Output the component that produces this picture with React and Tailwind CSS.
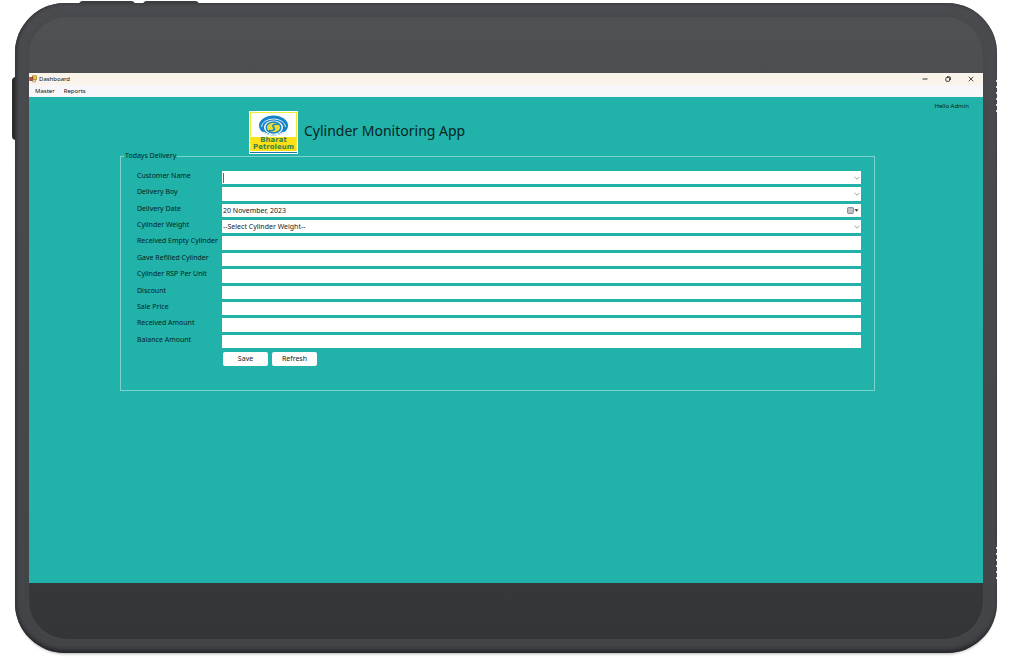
import React from "react";

const FIELDS = [
  { id: "customer", label: "Customer Name", kind: "select" },
  { id: "boy", label: "Delivery Boy", kind: "select" },
  { id: "date", label: "Delivery Date", kind: "date" },
  { id: "weight", label: "Cylinder Weight", kind: "select", value: "--Select Cylinder Weight--" },
  { id: "empty", label: "Received Empty Cylinder" },
  { id: "refilled", label: "Gave Refilled Cylinder" },
  { id: "rsp", label: "Cylinder RSP Per Unit" },
  { id: "discount", label: "Discount" },
  { id: "price", label: "Sale Price" },
  { id: "received", label: "Received Amount" },
  { id: "balance", label: "Balance Amount" },
];

function Logo() {
  return (
    <div className="flex h-[43px] w-[49px] shrink-0 flex-col border border-white bg-white">
      <div className="flex flex-1 flex-col border border-b-0 border-[#f4ea3a]">
        <svg viewBox="0 0 45 24" className="h-6 w-full" aria-hidden="true">
          <ellipse cx="22.5" cy="12.500" rx="14.5" ry="10" fill="#1683c4" />
          <path d="M10.500 14a12 8 0 0 1 24 0" fill="none" stroke="#d9eef8" strokeWidth="1" />
          <path d="M12 19q10.500 6 21 0" fill="none" stroke="#fff" strokeWidth="1" />
          <ellipse cx="22.5" cy="14.500" rx="9.5" ry="7" fill="#fff" />
          <ellipse cx="22.5" cy="14.500" rx="7.3" ry="5.4" fill="#e9dc35" stroke="#1683c4" strokeWidth="1.5" />
          <path d="M27 11.300c-5.500-.8-6 2-4.300 3.300s.5 3.700-4.700 3" fill="none" stroke="#1683c4" strokeWidth="1.5" />
        </svg>
        <div className="flex flex-1 flex-col items-center bg-[#fbe116] font-['DejaVu_Sans',sans-serif] text-[7px] leading-[7px] font-bold text-[#3d7f4b]">
          <span>Bharat</span>
          <span>Petroleum</span>
        </div>
      </div>
      <div className="h-[3px] border-t border-white bg-[#1878a8]" />
    </div>
  );
}

function Chevron() {
  return (
    <svg viewBox="0 0 6 4" className="pointer-events-none h-1 w-1.5 shrink-0" aria-hidden="true">
      <path d="M.5.700 3 3.200 5.500.700" fill="none" stroke="#888" strokeWidth=".8" />
    </svg>
  );
}

function Control({ field }) {
  if (field.kind === "select") {
    return (
      <div className="flex min-w-0 flex-1 items-center bg-white pr-px">
        {field.id === "customer" && <span className="ml-px h-2.5 w-px bg-[#666]" />}
        <select
          id={field.id}
          className="h-full min-w-0 flex-1 appearance-none bg-transparent pl-px text-[#222] outline-none"
        >
          <option>{field.value || ""}</option>
        </select>
        <Chevron />
      </div>
    );
  }
  if (field.kind === "date") {
    return (
      <div className="flex min-w-0 flex-1 items-center bg-[#fcfdfd] pr-0.5">
        <input
          id={field.id}
          defaultValue="20 November, 2023"
          className="h-full min-w-0 flex-1 bg-transparent pl-px text-[#222] outline-none"
        />
        <button type="button" aria-label="Open calendar" className="flex items-center">
          <svg viewBox="0 0 12 7" className="h-[7px] w-3" aria-hidden="true">
            <rect x=".5" y=".5" width="6" height="6" rx="1" fill="#b9bcc0" stroke="#777b80" strokeWidth=".8" />
            <path d="M1.500 2.500h4M1.500 4.500h4" stroke="#d4d5d8" strokeWidth=".5" />
            <path d="M7.500 2.300h4L9.500 4.800z" fill="#333" />
          </svg>
        </button>
      </div>
    );
  }
  return <input id={field.id} className="min-w-0 flex-1 bg-white pl-px text-[#222] outline-none" />;
}

function TitleBar() {
  return (
    <div className="flex h-3 items-center bg-[#f9f3ea] text-[6px] text-[#111]">
      <svg viewBox="0 0 8 8" className="mr-0.5 h-2 w-2" aria-hidden="true">
        <rect x="3.500" y=".8" width="4" height="4" fill="#f3c93c" stroke="#8a6d1d" strokeWidth=".6" />
        <rect x=".8" y="2.500" width="3.200" height="3.200" fill="#c8503c" stroke="#6b2b22" strokeWidth=".6" />
        <rect x="3.800" y="4.500" width="2.500" height="2.500" fill="#e8d9a0" stroke="#8a7a4a" strokeWidth=".5" />
      </svg>
      <span>Dashboard</span>
      <div className="ml-auto flex gap-[15px] pr-2">
        <button type="button" aria-label="Minimize">
          <svg viewBox="0 0 8 8" className="h-2 w-2"><path d="M1.500 4h5" stroke="#222" strokeWidth=".9" /></svg>
        </button>
        <button type="button" aria-label="Restore">
          <svg viewBox="0 0 8 8" className="h-2 w-2">
            <rect x="1.800" y="2.500" width="3.800" height="3.800" rx=".9" fill="none" stroke="#222" strokeWidth=".9" />
            <path d="M3 1.700h2.200q1.300 0 1.300 1.300v2" fill="none" stroke="#222" strokeWidth=".8" />
          </svg>
        </button>
        <button type="button" aria-label="Close">
          <svg viewBox="0 0 8 8" className="h-2 w-2"><path d="m1.700 1.700 4.600 4.600m0-4.600L1.700 6.300" stroke="#222" strokeWidth=".8" /></svg>
        </button>
      </div>
    </div>
  );
}

export default function App() {
  return (
    <div className="min-h-screen bg-white pt-[3px] pr-[14px] pb-2.5 pl-[15px] font-['Noto_Sans',sans-serif] text-[7px] leading-[10px]">
      <div className="relative">
        <span className="absolute -top-[2px] left-16 h-1 w-14 rounded-t-sm bg-[#3c3d40]" />
        <span className="absolute -top-[2px] left-32 h-1 w-14 rounded-t-sm bg-[#3c3d40]" />
        <span className="absolute top-[74px] -left-[3px] h-[63px] w-1 rounded-l-sm bg-[#2b2c2f]" />
        <div className="relative rounded-[50px] bg-linear-to-b from-[#4a4b4f] via-[#47484b] to-[#424447] shadow-[0_3px_3px_-2px_rgba(0,0,0,0.3)]">
          <span className="absolute top-[73px] right-0 h-10 w-px bg-[repeating-linear-gradient(180deg,#47484b_0_4px,#ddd_4px_6px)]" />
          <span className="absolute top-[540px] right-0 h-10 w-px bg-[repeating-linear-gradient(180deg,#47484b_0_4px,#ddd_4px_6px)]" />
          <div className="rounded-[50px] p-[14px] shadow-[inset_0_-5px_4px_-2px_#242528,inset_3px_0_3px_-1px_#38393c,inset_0_2px_2px_#434448]">
            <div className="rounded-[38px] bg-linear-to-b from-[#505155] to-[#343539] pt-14 pb-14 shadow-[0_0_3px_1px_#47484c]">
              <div className="flex min-h-[510px] flex-col bg-[#21b2aa]">
                <TitleBar />
                <nav className="flex h-3 items-center gap-[9px] bg-[#f7f6fa] pl-1.5 text-[6px] text-[#111]">
                  <button type="button">Master</button>
                  <button type="button">Reports</button>
                </nav>
                <main className="flex-1 pt-1 text-[#042423]">
                  <header className="flex items-start pr-3.5 pl-[220px]">
                    <div className="flex items-center gap-1.5 pt-2.5">
                      <Logo />
                      <h1 className="pb-1 text-[14px] leading-5">Cylinder Monitoring App</h1>
                    </div>
                    <span className="ml-auto text-[6px]">Hello Admin</span>
                  </header>
                  <fieldset className="mr-[108px] ml-[91px] border border-[#7cd3cd] pr-[13px] pb-6 pl-4">
                    <legend className="-ml-[13px] px-px leading-1">Todays Delivery</legend>
                    <div className="mt-[13px] grid h-[177px] auto-rows-fr gap-[3px]">
                      {FIELDS.map((field) => (
                        <div key={field.id} className="flex min-h-0">
                          <label htmlFor={field.id} className="w-[85px] shrink-0 whitespace-nowrap">
                            {field.label}
                          </label>
                          <Control field={field} />
                        </div>
                      ))}
                    </div>
                    <div className="mt-1 flex gap-1 pl-[86px] text-[#222]">
                      <button type="button" className="h-[14px] w-[45px] rounded-[2px] bg-[#fdfdfe]">Save</button>
                      <button type="button" className="h-[14px] w-[45px] rounded-[2px] bg-[#fdfdfe]">Refresh</button>
                    </div>
                  </fieldset>
                </main>
              </div>
            </div>
          </div>
        </div>
      </div>
    </div>
  );
}
